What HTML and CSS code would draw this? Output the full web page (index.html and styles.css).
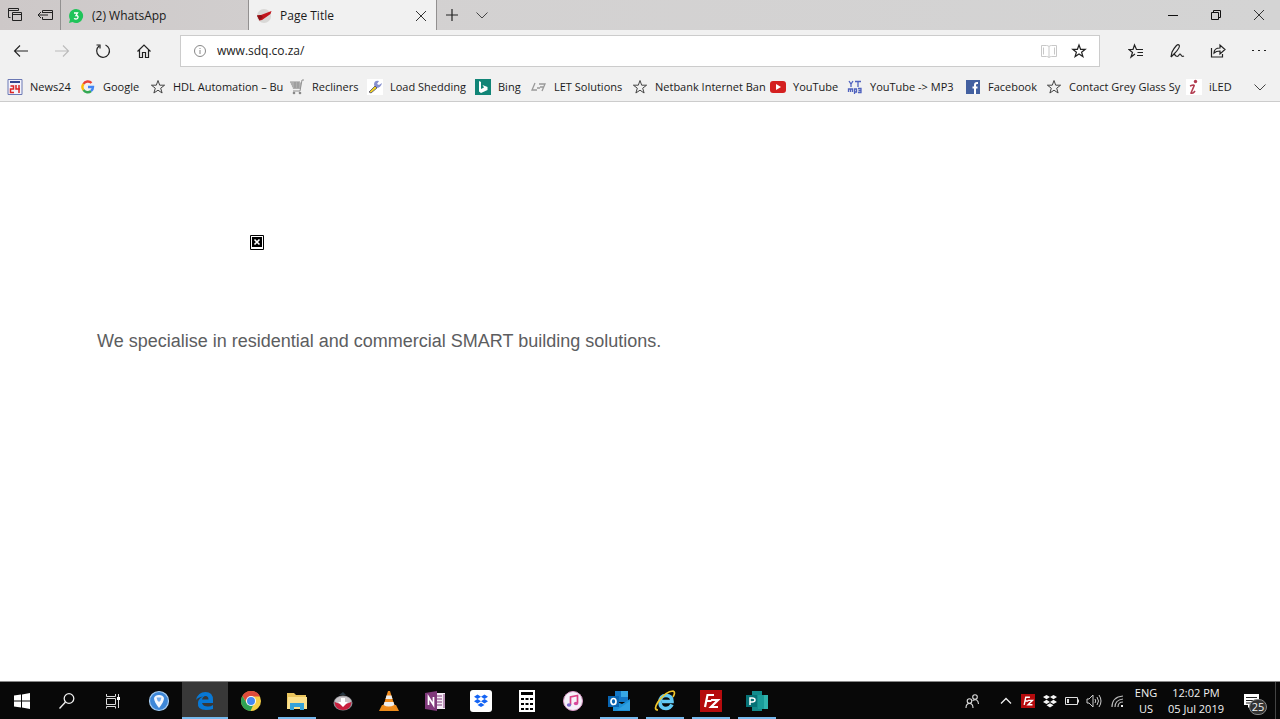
FILE: index.html
```html
<!DOCTYPE html>
<html lang="en">
<head>
<meta charset="utf-8">
<title>Page Title</title>
<link rel="stylesheet" href="styles.css">
</head>
<body>
<svg class="defs" aria-hidden="true">
  <symbol id="star" viewBox="0 0 16 16"><path d="M8 1.5 9.7 6.2H14.6L10.7 9.2 12.1 14 8 11.2 3.9 14 5.3 9.2 1.4 6.2H6.3Z" fill="none" stroke="#444" stroke-width="1"/></symbol>
  <symbol id="chevron" viewBox="0 0 16 16"><path d="M2.5 5.5 8 11l5.500-5.500" fill="none" stroke="#444" stroke-width="1"/></symbol>
  <symbol id="cross" viewBox="0 0 16 16"><path d="M3 3l10 10M13 3 3 13" fill="none" stroke="#333" stroke-width="1"/></symbol>
  <symbol id="filezilla" viewBox="0 0 22 22"><path fill="#b50b0d" d="M0 0h22v22H0z"/><path d="M5 17 7.500 5H14M6.500 11h5M11 10h7l-7 7h7" fill="none" stroke="#fff" stroke-width="2.200"/></symbol>
</svg>

<header class="browser">
  <div class="tabbar">
    <div class="tab-tools">
      <button class="tool" aria-label="Tabs set aside"><svg class="i16" viewBox="0 0 16 16"><path d="M3.500 10.500h-2v-9h10v2M5.500 5.500h9v8h-9zM1.500 3.500h10M5.500 7.500h9" fill="none" stroke="#222"/></svg></button>
      <button class="tool" aria-label="Set tabs aside"><svg class="i16" viewBox="0 0 16 16"><path d="M5.500 6V3.500h10v9h-10V10M5.500 5.500h10M11 8H1M4 5 1 8l3 3" fill="none" stroke="#222"/></svg></button>
    </div>
    <a class="tab" href="#whatsapp"><svg class="i16" viewBox="0 0 16 16"><path d="M8 1a7 7 0 1 1-3.500 13L1 15l1-3.500A7 7 0 0 1 8 1Z" fill="#20c45a"/><path d="M6 5h3.500L8 7.500c3-.2 2.500 3.500 0 3.500-1 0-2-.5-2-.5" fill="none" stroke="#fff" stroke-width="1.300"/></svg><span>(2) WhatsApp</span></a>
    <div class="tab current"><svg class="i16" viewBox="0 0 16 16"><circle cx="8" cy="8" r="7" fill="#d9d8d6"/><path d="M1 7.500 5 7 15.500 3 14.500 6 6 12 3.500 12.500Z" fill="#c2151c"/><path d="m1 7.500 4-.5 2 2-3.500 3.500Z" fill="#8e1015"/></svg><a href="#page">Page Title</a><button class="close" aria-label="Close tab"><svg class="i16"><use href="#cross"/></svg></button></div>
    <button class="newtab" aria-label="New tab"><svg class="i16" viewBox="0 0 16 16"><path d="M8 2v12M2 8h12" stroke="#222" stroke-width="1.200"/></svg></button>
    <button class="newtab" aria-label="Show tab previews"><svg class="i16"><use href="#chevron"/></svg></button>
    <div class="window-tools">
      <button aria-label="Minimize"><svg class="i16" viewBox="0 0 16 16"><path d="M3 8.500h10" stroke="#111"/></svg></button>
      <button aria-label="Restore"><svg class="i16" viewBox="0 0 16 16"><path d="M3.500 5.500h7v7h-7zM5.500 5.500v-2h7v7h-2" fill="none" stroke="#111"/></svg></button>
      <button aria-label="Close"><svg class="i16"><use href="#cross"/></svg></button>
    </div>
  </div>

  <div class="toolbar">
    <nav class="nav">
      <button aria-label="Back"><svg class="i16" viewBox="0 0 16 16"><path d="M15 8H1.500M7 2.500 1.500 8 7 13.500" fill="none" stroke="#222" stroke-width="1.100"/></svg></button>
      <button aria-label="Forward" disabled><svg class="i16" viewBox="0 0 16 16"><path d="M1 8h13.500M9 2.500 14.500 8 9 13.500" fill="none" stroke="#bbb" stroke-width="1.100"/></svg></button>
      <button aria-label="Refresh"><svg class="i16" viewBox="0 0 16 16"><path d="M10.500 2A6.400 6.400 0 1 1 4 3M1.500 2H5v3.500" fill="none" stroke="#222" stroke-width="1.200"/></svg></button>
      <button aria-label="Home"><svg class="i16" viewBox="0 0 16 16"><path d="M1.500 8.500 8 2l6.500 6.500M3.500 7v7.500h3V9.500h3v5h3V7" fill="none" stroke="#222" stroke-width="1.200"/></svg></button>
    </nav>
    <form class="address">
      <svg class="i14" viewBox="0 0 14 14"><circle cx="7" cy="7" r="5.500" fill="none" stroke="#888"/><path d="M7 6v4M7 4v1" stroke="#888"/></svg>
      <input type="text" aria-label="Address" value="www.sdq.co.za/">
      <button type="button" aria-label="Reading view"><svg class="i16" viewBox="0 0 16 16"><path d="M8 3.500Q7 2.500 5.500 2.500h-5v11h5Q7 13.500 8 14.500q1-1 2.500-1h5v-11h-5Q9 2.500 8 3.500v11M2.500 4.500v7M13.500 4.500v7" fill="none" stroke="#c8c8c8"/></svg></button>
      <button type="button" aria-label="Add to favorites"><svg class="i16" viewBox="0 0 16 16"><path d="M8 2 9.600 6.300H14.200L10.600 9.200 11.900 13.600 8 11 4.100 13.600 5.400 9.200 1.800 6.300H6.400Z" fill="none" stroke="#222" stroke-width="1.200"/></svg></button>
    </form>
    <div class="actions">
      <button aria-label="Favorites hub"><svg class="i16" viewBox="0 0 16 16"><path d="M15 6.500H8.500L6.500 2 5 6.500H1l3.500 3L3 14l4-3M9.500 9.500H15M9 12.500h6" fill="none" stroke="#222" stroke-width="1.200"/></svg></button>
      <button aria-label="Add notes"><svg class="i16" viewBox="0 0 16 16"><path d="M2 14 3 9Q8 0 10 2T5 11L2 14M5 11l2 2q2 1 3-1t2 0 3 1" fill="none" stroke="#222" stroke-width="1.200"/></svg></button>
      <button aria-label="Share"><svg class="i16" viewBox="0 0 16 16"><path d="M1.500 5v9h11v-3M4 10q0-5 6-5V2l5 4.500-5 4.500V8Q6 8 4 10Z" fill="none" stroke="#222" stroke-width="1.200"/></svg></button>
      <button aria-label="Settings and more"><svg class="i16" viewBox="0 0 16 16"><path d="M1 7h2v1H1zM7 7h2v1H7zM13 7h2v1h-2z" fill="#222"/></svg></button>
    </div>
  </div>

  <nav class="favorites" aria-label="Favorites">
    <a href="#n"><svg class="i16" viewBox="0 0 16 16"><path fill="#f3f3fb" stroke="#6b78b4" d="M1 .5h14v15H1z"/><path d="M3 3h10" stroke="#34468f" stroke-width="2"/><path d="M3.500 7h3v3h-3v3.500h3.500M9 6v4h4M12 6v8" fill="none" stroke="#dc2626" stroke-width="1.500"/></svg><span>News24</span></a>
    <a href="#g"><svg class="i16" viewBox="0 0 16 16"><g fill="none" stroke-width="2.400"><path d="M3.500 5A5 5 0 0 1 11.500 4" stroke="#ea4335"/><path d="M3.500 11A5 5 0 0 1 3.500 5" stroke="#fbbc05"/><path d="M3.500 11A5 5 0 0 0 11 12" stroke="#34a853"/><path d="M11 12A5 5 0 0 0 13 8H8" stroke="#4285f4"/></g></svg><span>Google</span></a>
    <a href="#h"><svg class="i16"><use href="#star"/></svg><span>HDL Automation – Bu</span></a>
    <a href="#r"><svg class="i16" viewBox="0 0 16 16"><path d="M1 3h11l-1 7H4Z" fill="#ccc"/><path d="M1 3h10M2 5h10M3 7h9M4 9h8M15 1h-2l-2 11H4M6 3v6M9 3v6" fill="none" stroke="#909090"/><circle cx="5" cy="14" r="1.300" fill="#888"/><circle cx="11" cy="14" r="1.300" fill="#888"/></svg><span>Recliners</span></a>
    <a href="#l"><svg class="i16" viewBox="0 0 16 16"><path fill="#fff" d="M0 0h16v16H0z"/><path d="M7 6q0-5 5-4l-2 3 2 1 3-2q-1 5-6 5" fill="#8790cf"/><path d="m2 13 6-6 2 2-6 5Z" fill="#f3d321" stroke="#4a4a6a" stroke-width=".8"/></svg><span>Load Shedding</span></a>
    <a href="#b"><svg class="i16" viewBox="0 0 16 16"><path fill="#118577" d="M0 0h16v16H0z"/><path d="m4 2 2 1v7l3-1.500-1.500-2.500 5 2v3L6 14l-2-1.500Z" fill="#fff"/></svg><span>Bing</span></a>
    <a href="#t"><svg class="i16" viewBox="0 0 16 16"><path d="M4 4 1 11h5M6 9h3M8 5h6l-3 7M9 8h4" fill="none" stroke="#999" stroke-width="1.300"/></svg><span>LET Solutions</span></a>
    <a href="#nb"><svg class="i16"><use href="#star"/></svg><span>Netbank Internet Ban</span></a>
    <a href="#y"><svg class="i16" viewBox="0 0 16 16"><rect y="2" width="16" height="12" rx="3" fill="#d42020"/><path d="m6 5 5 3-5 3Z" fill="#fff"/></svg><span>YouTube</span></a>
    <a href="#m"><svg class="i16" viewBox="0 0 16 16"><path d="m2 2 2 3 2-3M4 5v3M8 2.500h6M11 2v6M1.500 13v-3h4v3M3.500 10v3M7.500 15v-5h2v3h-2M11 9.500h3v4h-3M11.500 11.500H14" fill="none" stroke="#4f62be" stroke-width="1.300"/></svg><span>YouTube -&gt; MP3</span></a>
    <a href="#f"><svg class="i16" viewBox="0 0 16 16"><path fill="#4360a0" d="M1 1h14v14H1z"/><path d="M13 4h-1q-2 0-2 2v9M7.500 8.500h5" fill="none" stroke="#fff" stroke-width="2"/></svg><span>Facebook</span></a>
    <a href="#c"><svg class="i16"><use href="#star"/></svg><span>Contact Grey Glass Sy</span></a>
    <a href="#i"><svg class="i16" viewBox="0 0 16 16"><path fill="#fff" d="M0 0h16v16H0z"/><path d="M4 7q5-2 4 0l-3 7q2 1 4-2" fill="none" stroke="#b23c50" stroke-width="1.600"/><circle cx="9.500" cy="2.500" r="1.700" fill="#b23c50"/></svg><span>iLED</span></a>
    <button aria-label="More favorites"><svg class="i16"><use href="#chevron"/></svg></button>
  </nav>
</header>

<main class="page">
  <svg class="missing" viewBox="0 0 14 15" role="img" aria-label="Missing image"><path fill="#fff" stroke="#000" d="M.5.500h13v14H.500z"/><path d="M2 2h10v10H2z"/><path d="m4.500 4.500 5 5m0-5-5 5" stroke="#fff" stroke-width="1.600"/></svg>
  <p>We specialise in residential and commercial SMART building solutions.</p>
</main>

<footer class="taskbar">
  <button class="task" aria-label="Start"><svg class="i16" viewBox="0 0 16 16"><path fill="#fff" d="m0 2.500 7-1v6H0zM8 1.400 16 0v7.500H8zM0 8.500h7v6l-7-1zM8 8.500h8V16l-8-1.400z"/></svg></button>
  <button class="task" aria-label="Search"><svg class="i16" viewBox="0 0 16 16"><circle cx="10" cy="5.500" r="4.800" fill="none" stroke="#eee" stroke-width="1.300"/><path d="m6.500 9-6 6.500" stroke="#eee" stroke-width="1.400"/></svg></button>
  <button class="task" aria-label="Task view"><svg class="i16" viewBox="0 0 16 16"><path d="M1.500 1v2.500h9V1M1.500 5.500h9v6h-9zM1.500 15.500v-2h9v2M13.500 1v14" fill="none" stroke="#ddd"/><path fill="#fff" d="M12 4h3v3h-3z"/></svg></button>
  <button class="task" aria-label="Maps"><svg class="i22" viewBox="0 0 22 22"><circle cx="11" cy="11" r="9.500" fill="#3d87d8" stroke="#a8cdf0" stroke-width="1.200"/><path d="M11 18C8 14 6 11 6 8q1-3 5-3t5 3c0 3-2 6-5 10Z" fill="#f4f8fd"/><path d="M8.500 7.500h5l-1 3-1.500 1.500-1.500-1.500Z" fill="#75aceb"/></svg></button>
  <button class="task active open" aria-label="Edge"><svg class="i22" viewBox="0 0 22 22"><path d="M2 10Q4 2 11.500 2q7.500 0 7.500 8v3H8q1 3.500 6 3.500 3 0 5-1.500v4Q16 20 12 20 3 20 4 13q0-4 5-6.500-5 .5-7 3.500Zm6-.5h6.500q0-3.500-3-3.500Q9 6 8 9.500Z" fill="#0878d4"/></svg></button>
  <button class="task" aria-label="Chrome"><svg class="i22" viewBox="0 0 22 22"><circle cx="11" cy="11" r="10" fill="#f7cf45"/><path d="M2.300 6A10 10 0 0 1 20 6.500h-9L7 13Z" fill="#de4b3b"/><path d="M2.300 6 7 13.500l6 2L10.500 21A10 10 0 0 1 2.300 6Z" fill="#2fa153"/><circle cx="11" cy="11" r="5" fill="#fff"/><circle cx="11" cy="11" r="4" fill="#4688f1"/></svg></button>
  <button class="task open" aria-label="File Explorer"><svg class="i22" viewBox="0 0 22 22"><path d="M1 3h7l2 2h10v14H1z" fill="#e9c45c"/><path d="M2 7h19v12H1z" fill="#fbe08c"/><path d="M4 20v-7h14v7h-4v-3H8v3Z" fill="#36a3d9"/></svg></button>
  <button class="task" aria-label="Downloader"><svg class="i22" viewBox="0 0 22 22"><path d="m7 5 4-3 3 3" fill="#263540"/><ellipse cx="11" cy="13" rx="9.500" ry="7.500" fill="#8e8e94"/><ellipse cx="11" cy="11" rx="8" ry="4.500" fill="#c9c4c8"/><path d="M2.500 12q8.500 4 17 0-1 8-8.500 8t-8.500-8Z" fill="#c91e3d"/><path d="M9 8h4v4h3l-5 5-5-5h3Z" fill="#fff"/></svg></button>
  <button class="task" aria-label="VLC"><svg class="i22" viewBox="0 0 22 22"><path d="M4 15h14l3 6H1Z" fill="#ec8b1b"/><path d="M10 1h2l5 16q-6 3-12 0Z" fill="#f28c1d"/><path d="m8.500 5.500-1 3.500h7l-1-3.500ZM6.500 12l-1 3q5 3 11 0l-1-3Z" fill="#eee"/></svg></button>
  <button class="task" aria-label="OneNote"><svg class="i22" viewBox="0 0 22 22"><path d="M12 3h9v16h-9z" fill="#f5edf6"/><path d="M13 6h5M13 9h5M13 12h5M13 15h5M20 4v14" stroke="#80397b"/><path d="m1 3 12-2v20L1 19Z" fill="#80397b"/><path d="M4.500 15V7l5 8V7" fill="none" stroke="#fff" stroke-width="1.700"/></svg></button>
  <button class="task" aria-label="Dropbox"><svg class="i22" viewBox="0 0 22 22"><rect width="22" height="22" rx="3" fill="#fff"/><path d="m7.500 4.500 3.500 2.200-3.500 2.200L4 6.700zM14.500 4.500 18 6.700l-3.500 2.200L11 6.700zM7.500 9l3.500 2.200-3.500 2.200L4 11.200zM14.500 9l3.500 2.200-3.500 2.200-3.500-2.200zM11 12.700l3.500 2.200L11 17.100l-3.500-2.200z" fill="#1464f4"/></svg></button>
  <button class="task" aria-label="Calculator"><svg class="i22" viewBox="0 0 22 22"><path fill="#fff" d="M3 0h16v22H3z"/><path d="M5 2h12v3H5zM5 8h3v2H5zM9.500 8h3v2h-3zM14 8h3v2h-3zM5 13h3v2H5zM9.500 13h3v2h-3zM14 13h3v2h-3zM5 18h3v2H5zM9.500 18h3v2h-3zM14 18h3v2h-3z"/></svg></button>
  <button class="task" aria-label="iTunes"><svg class="i22" viewBox="0 0 22 22"><circle cx="11" cy="11" r="9.500" fill="#f5f1fa" stroke="#db9ac7"/><path d="M8.500 15V7l7-1.500V13" fill="none" stroke="#db3f83" stroke-width="1.700"/><ellipse cx="7" cy="15" rx="2.200" ry="1.800" fill="#7b67cd"/><ellipse cx="14" cy="13.500" rx="2.200" ry="1.800" fill="#d64a9d"/></svg></button>
  <button class="task open" aria-label="Outlook"><svg class="i22" viewBox="0 0 22 22"><path fill="#1477c5" d="M7 1h13v11H7z"/><path fill="#37a8e4" d="M13 1h7v6h-7z"/><path fill="#1b90d8" d="m5 10 9 4 8-5v12H5z"/><path d="m9 20 13-9v9" fill="#2f9fe0"/><path fill="#0864b1" d="M0 6h11v11H0z"/><ellipse cx="5.500" cy="11.500" rx="2.500" ry="3" fill="none" stroke="#fff" stroke-width="1.700"/></svg></button>
  <button class="task open" aria-label="Internet Explorer"><svg class="i22" viewBox="0 0 22 22"><path d="M18 14.500q-2 4-6 4-6 0-6-6.500t6-6.500q6 0 6 6H8" fill="none" stroke="#62c9f3" stroke-width="3.600"/><path d="M4 20Q-1 20 4 12 12 1 19 1q3 1 0 6" fill="none" stroke="#f1c62b" stroke-width="1.700"/></svg></button>
  <button class="task open" aria-label="FileZilla"><svg class="i22"><use href="#filezilla"/></svg></button>
  <button class="task open" aria-label="Publisher"><svg class="i22" viewBox="0 0 22 22"><path d="M6 1h10v20H6z" fill="#128b8c"/><path d="M12 5h10v14H12z" fill="#2fb3ad"/><path d="M12 5h6v14h-6z" fill="#199b98"/><path d="M0 5h11v12H0z" fill="#067276"/><path d="M4 15V8h2q3 0 3 2t-3 2H4" fill="none" stroke="#fff" stroke-width="1.500"/></svg></button>
  <div class="tray">
    <button class="people" aria-label="People"><svg class="i16" viewBox="0 0 16 16"><g fill="none" stroke="#ddd" stroke-width="1.100"><circle cx="5.500" cy="8" r="2.300"/><path d="M2 15q0-4.500 3.500-4.500T9 15"/><circle cx="11" cy="4" r="2.300"/><path d="M8.500 7.500Q14 5 14.500 11"/></g></svg></button>
    <button aria-label="Show hidden icons"><svg class="i16" viewBox="0 0 16 16"><path d="m3 10.500 5-5 5 5" fill="none" stroke="#eee" stroke-width="1.300"/></svg></button>
    <button aria-label="FileZilla status"><svg class="i14"><use href="#filezilla"/></svg></button>
    <button aria-label="Dropbox status"><svg class="i16" viewBox="0 0 16 16"><path d="m4.500 2 3.500 2-3.500 2.300L1 4zM11.500 2 15 4l-3.500 2.300L8 4zM4.500 6.700 8 9l-3.500 2L1 9zM11.500 6.700 15 9l-3.500 2L8 9zM8 10.300l3.500 2L8 14.500l-3.500-2.200z" fill="#f5f5f5"/></svg></button>
    <button aria-label="Battery"><svg class="i16" viewBox="0 0 16 16"><path d="M1.500 4.500h12v7h-12zM14.500 6.500v3" fill="none" stroke="#ddd"/><path d="M3 6h2v4H3z" fill="#ddd"/></svg></button>
    <button aria-label="Volume"><svg class="i16" viewBox="0 0 16 16"><path d="M1 6h2l4-4v12l-4-4H1ZM9 6q1.500 2 0 4M11 4q3 4 0 8M13 2q4 6 0 12" fill="none" stroke="#ccc"/></svg></button>
    <button class="network" aria-label="Network"><svg class="i16" viewBox="0 0 16 16"><path d="M3 14Q3 4 14 3M6 14q0-7 8-8M9 14q0-5 5-5" fill="none" stroke="#bbb" stroke-width="1.200"/><path d="M12 12h2v2h-2z" fill="#eee"/></svg></button>
    <button class="lang"><span>ENG</span><span>US</span></button>
    <button class="clock"><span>12:02 PM</span><span>05 Jul 2019</span></button>
    <button class="notices" aria-label="25 notifications"><svg class="i16" viewBox="0 0 16 16"><path d="M0 1h15v11H7l-3 3v-3H0Z" fill="#fff"/><path d="M2 4.500h11M2 7.500h11M2 10h7" stroke="#222"/></svg><span class="badge">25</span></button>
  </div>
</footer>
</body>
</html>
```
FILE: styles.css
```css
* { box-sizing: border-box; }

body {
  margin: 0;
  min-height: 100vh;
  display: flex;
  flex-direction: column;
  background: #fff;
  color: #1a1a1a;
  font: 12px/16px "Open Sans", "Noto Sans", sans-serif;
}

a { color: inherit; text-decoration: none; }

button {
  display: flex;
  align-items: center;
  justify-content: center;
  padding: 0;
  border: 0;
  background: none;
  color: inherit;
  font: inherit;
}

svg { flex: none; display: block; }
.defs { position: absolute; width: 0; height: 0; }
.i14 { width: 14px; height: 14px; }
.i16 { width: 16px; height: 16px; }
.i22 { width: 22px; height: 22px; }

.browser { background: #f1f1f1; border-bottom: 1px solid #ccc; }

/* Tab strip */
.tabbar {
  display: flex;
  height: 30px;
  background: linear-gradient(90deg, #cdc8c8, #d3d1d1 30%, #d4d4d4);
}
.tab-tools { display: flex; width: 61px; border-right: 1px solid #929090; }
.tool { flex: 1; }
.tab {
  display: flex;
  align-items: center;
  gap: 8px;
  width: 188px;
  padding: 1px 7px 0;
  border-right: 1px solid #929090;
}
.tab.current { background: #f1f1f1; }
.close { margin-left: auto; }
.newtab { width: 30px; }
.window-tools { display: flex; margin-left: auto; }
.window-tools button { width: 43px; }

/* Navigation and address */
.toolbar { display: flex; align-items: center; height: 42px; }
.nav, .actions { display: flex; width: 180px; }
.actions { justify-content: flex-end; padding-right: 1px; }
.nav button, .actions button { width: 41px; height: 32px; }
.address {
  display: flex;
  flex: 1;
  align-items: center;
  height: 32px;
  padding: 0 5px 0 12px;
  border: 1px solid #ccc;
  background: #fff;
}
.address input {
  flex: 1;
  min-width: 0;
  padding: 0 10px;
  border: 0;
  background: none;
  color: #222;
  font: inherit;
}
.address button { width: 30px; height: 28px; }

/* Favorites */
.favorites {
  display: grid;
  grid-template-columns: 73px 70px 139px 78px 108px 56px 101px 138px 77px 118px 81px 140px 1fr 40px;
  align-items: center;
  height: 29px;
  padding-left: 7px;
  font-size: 11px;
}
.favorites a { display: flex; gap: 7px; white-space: nowrap; }

/* Page */
.page {
  flex: 1;
  padding: 133px 97px 0;
  color: #5c5d60;
  font: 18px/22px "Liberation Sans", Arial, sans-serif;
}
.missing { width: 14px; height: 15px; margin-left: 153px; }
.page p { margin: 80px 0 0; }

/* Taskbar */
.taskbar {
  display: flex;
  height: 38px;
  border-top: 1px solid #888;
  background: #080808;
  color: #f2f2f2;
}
.task { width: 46px; position: relative; }
.task:first-child { width: 44px; }
.task.active { background: #383838; }
.task.open::after {
  content: "";
  position: absolute;
  inset: auto 4px 0;
  height: 2px;
  background: #76b9ed;
}
.task.active::after { inset: auto 0 0; }
.tray { display: flex; margin-left: auto; }
.tray button { width: 22px; }
.tray .people { width: 46px; }
.tray .network { width: 24px; }
.tray .lang, .tray .clock { flex-direction: column; font-size: 11px; }
.tray .lang { width: 34px; }
.tray .clock { width: 66px; white-space: nowrap; }
.tray .notices {
  width: 47px;
  margin-right: 4px;
  border-right: 1px solid #444;
  position: relative;
}
.badge {
  position: absolute;
  left: 20px;
  top: 17px;
  width: 18px;
  border: 1px solid #888;
  border-radius: 8px;
  background: #333;
  font-size: 11px;
  line-height: 14px;
}
```
